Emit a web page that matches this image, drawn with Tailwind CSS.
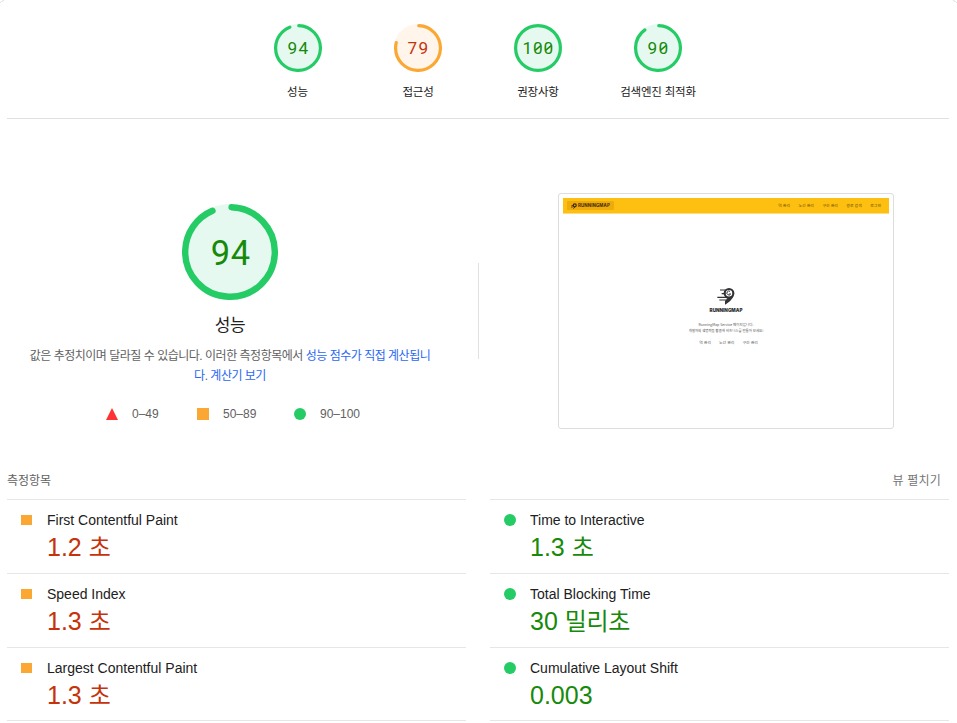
<!DOCTYPE html>
<html lang="ko">
<head>
<meta charset="utf-8">
<title>Lighthouse</title>
<script src="https://cdn.jsdelivr.net/npm/@tailwindcss/browser@4"></script>
</head>
<body class="bg-white overflow-hidden font-['Liberation_Sans','Noto_Sans_CJK_KR',sans-serif] text-[#212121]">
<div class="relative w-[957px] h-[723px] overflow-hidden px-[7px]">
  <svg class="absolute left-0 top-0" width="957" height="5" fill="none" stroke="#e0e0e0"><path d="M0 3Q1 1 4 .5M957 3Q956 1 953 .5"/></svg>

  <header class="h-[119px] w-[942px] border-b border-[#e0e0e0] pt-6 pl-[231px] flex text-center text-[11.5px] leading-4 tracking-[-0.2px]">
    <div class="w-[120px] flex flex-col items-center">
      <svg class="w-12 h-12" viewBox="0 0 120 120"><circle cx="60" cy="60" r="60" fill="#e6f9f0"/><circle cx="60" cy="60" r="56" fill="none" stroke="#25cc66" stroke-width="8" stroke-linecap="round" stroke-dasharray="326.75 352" transform="rotate(-87.95 60 60)"/><text x="34" y="75" textLength="51" font-family="Roboto" font-size="43" fill="#178a0b">94</text></svg>
      <span class="mt-3 mr-px whitespace-nowrap">성능</span>
    </div>
    <div class="w-[120px] flex flex-col items-center">
      <svg class="w-12 h-12" viewBox="0 0 120 120"><circle cx="60" cy="60" r="60" fill="#fff5eb"/><circle cx="60" cy="60" r="56" fill="none" stroke="#fba733" stroke-width="8" stroke-linecap="round" stroke-dasharray="273.97 352" transform="rotate(-87.95 60 60)"/><text x="34" y="75" textLength="51" font-family="Roboto" font-size="43" fill="#c5330b">79</text></svg>
      <span class="mt-3 whitespace-nowrap">접근성</span>
    </div>
    <div class="w-[120px] flex flex-col items-center">
      <svg class="w-12 h-12" viewBox="0 0 120 120"><circle cx="60" cy="60" r="60" fill="#e6f9f0"/><circle cx="60" cy="60" r="56" fill="none" stroke="#25cc66" stroke-width="8"/><text x="21" y="75" textLength="77" font-family="Roboto" font-size="43" fill="#178a0b">100</text><path d="M53 66L67 54M79 66L93 54" stroke="#178a0b" stroke-width="3.5"/></svg>
      <span class="mt-3 whitespace-nowrap">권장사항</span>
    </div>
    <div class="w-[120px] flex flex-col items-center">
      <svg class="w-12 h-12" viewBox="0 0 120 120"><circle cx="60" cy="60" r="60" fill="#e6f9f0"/><circle cx="60" cy="60" r="56" fill="none" stroke="#25cc66" stroke-width="8" stroke-linecap="round" stroke-dasharray="312.67 352" transform="rotate(-87.95 60 60)"/><text x="34" y="75" textLength="51" font-family="Roboto" font-size="43" fill="#178a0b">90</text><path d="M66 66L80 54" stroke="#178a0b" stroke-width="3.5"/></svg>
      <span class="mt-3 whitespace-nowrap">검색엔진 최적화</span>
    </div>
  </header>

  <main>
    <section class="h-[348px] w-[942px] flex">
      <div class="w-[446px] pt-[85px] flex flex-col items-center">
        <svg class="w-24 h-24" viewBox="0 0 120 120"><circle cx="60" cy="60" r="60" fill="#e6f9f0"/><circle cx="60" cy="60" r="56" fill="none" stroke="#25cc66" stroke-width="8" stroke-linecap="round" stroke-dasharray="326.75 352" transform="rotate(-87.95 60 60)"/><text x="36" y="76" textLength="49" font-family="Roboto" font-size="43" fill="#178a0b">94</text></svg>
        <h2 class="mt-[14px] text-[17px] leading-6 tracking-[-0.5px]">성능</h2>
        <p class="mt-2 h-10 text-[12px] leading-5 tracking-[-0.49px] text-[#616161] text-center whitespace-nowrap">값은 추정치이며 달라질 수 있습니다. 이러한 측정항목에서 <a class="text-[#2a67f4]">성능 점수가 직접 계산됩니<br>다</a>. <a class="text-[#2a67f4]">계산기 보기</a></p>
        <div class="mt-[18px] w-[446px] pl-[99px] h-5 flex items-center text-[12px] text-[#616161]">
          <svg class="w-3 h-3" viewBox="0 0 12 12"><path d="M6 0L12 12H0Z" fill="#f33"/></svg><span class="ml-[14px] w-[65px]">0–49</span>
          <i class="w-3 h-3 bg-[#fba733]"></i><span class="ml-[14px] w-[71px]">50–89</span>
          <i class="w-3 h-3 rounded-full bg-[#25cc66]"></i><span class="ml-[14px]">90–100</span>
        </div>
      </div>
      <div class="mt-[144px] ml-[25px] w-px h-24 bg-[#e0e0e0]"></div>
      <div class="mt-[74px] ml-[79px] w-[336px] h-[236px] border border-[#ddd] rounded-[3px] p-1 font-['Noto_Sans_CJK_KR',sans-serif]">
        <div class="h-4 w-[326px] bg-[#fdbf10] border-b border-[#ffdb80] flex items-center text-[3.9px] leading-none text-[#6b4c08] whitespace-nowrap">
          <div class="ml-1 w-[47px] h-[9px] bg-[#efaa0b] rounded-[1px] flex items-center pl-[4px] text-[#3b2c0b]">
            <svg width="6" height="6" viewBox="0 0 24 24" fill="none" stroke="currentColor"><circle cx="15" cy="9" r="6" stroke-width="5"/><path d="M19 13L9 23M2 10H9M0 16H10" stroke-width="3"/></svg>
            <b class="ml-px mt-px text-[4.4px] font-bold font-['Inter',sans-serif] tracking-[0.1px]">RUNNINGMAP</b>
          </div>
          <div class="ml-auto mr-[8px] mt-px flex gap-[8.5px]"><span>역 관리</span><span>노선 관리</span><span>구간 관리</span><span>경로 검색</span><span>로그인</span></div>
        </div>
        <div class="pt-[73px] flex flex-col items-center text-[3.4px] leading-none text-[#555] whitespace-nowrap">
          <svg class="w-5 h-[18px]" viewBox="0 0 60 54" fill="none" stroke="#303236"><circle cx="39" cy="19" r="13" stroke-width="6.5"/><path d="M42 13A6 6 0 1 0 44 21H39" stroke-width="3"/><path d="M54 25C49 38 37 48 27 53V42L34 34Z" fill="#303236" stroke="none"/><path d="M12 9H28M17 20H26M4 31H30M10 39H31" stroke-width="3.5"/></svg>
          <b class="mt-1 text-[4.6px] font-black text-[#303236] font-['Inter',sans-serif]">RUNNINGMAP</b>
          <span class="mt-[9px] text-[3.5px]">RunningMap Service 페이지입니다.</span>
          <span class="mt-[3px]">개발자의 생명력을 활용해 비즈니스를 만들어 보세요!</span>
          <div class="mt-[8px] mr-[-5px] flex gap-[8px] text-[3.9px]"><span>역 관리</span><span>노선 관리</span><span>구간 관리</span></div>
        </div>
      </div>
    </section>

    <div class="h-8 w-[942px] pt-px flex justify-between text-[12px] leading-[27px] text-[#616161] whitespace-nowrap"><span>측정항목</span><span class="mr-2 text-[#757575] tracking-[0.2px]">뷰 펼치기</span></div>

    <section class="w-[942px] grid grid-cols-[459px_459px] gap-x-6 text-[14px]">
      <div class="h-[74px] border-t border-[#e6e6e6] flex pt-[10px]"><i class="mt-[5px] ml-[14px] w-[11px] h-[10px] bg-[#fba733]"></i><div class="ml-[15px]"><div class="leading-5">First Contentful Paint</div><div class="text-[25px] leading-[34px] text-[#c5330b] whitespace-nowrap">1.2 <span class="text-[24px]">초</span></div></div></div>
      <div class="h-[74px] border-t border-[#e6e6e6] flex pt-[10px]"><i class="mt-1 ml-[14px] w-3 h-3 rounded-full bg-[#25cc66]"></i><div class="ml-[14px]"><div class="leading-5">Time to Interactive</div><div class="text-[25px] leading-[34px] text-[#178a0b] whitespace-nowrap">1.3 <span class="text-[24px]">초</span></div></div></div>
      <div class="h-[74px] border-t border-[#e6e6e6] flex pt-[10px]"><i class="mt-[5px] ml-[14px] w-[11px] h-[10px] bg-[#fba733]"></i><div class="ml-[15px]"><div class="leading-5">Speed Index</div><div class="text-[25px] leading-[34px] text-[#c5330b] whitespace-nowrap">1.3 <span class="text-[24px]">초</span></div></div></div>
      <div class="h-[74px] border-t border-[#e6e6e6] flex pt-[10px]"><i class="mt-1 ml-[14px] w-3 h-3 rounded-full bg-[#25cc66]"></i><div class="ml-[14px]"><div class="leading-5">Total Blocking Time</div><div class="text-[25px] leading-[34px] text-[#178a0b] whitespace-nowrap">30 <span class="text-[24px] tracking-[-0.3px]">밀리초</span></div></div></div>
      <div class="h-[74px] border-y border-[#e6e6e6] flex pt-[10px]"><i class="mt-[5px] ml-[14px] w-[11px] h-[10px] bg-[#fba733]"></i><div class="ml-[15px]"><div class="leading-5">Largest Contentful Paint</div><div class="text-[25px] leading-[34px] text-[#c5330b] whitespace-nowrap">1.3 <span class="text-[24px]">초</span></div></div></div>
      <div class="h-[74px] border-y border-[#e6e6e6] flex pt-[10px]"><i class="mt-1 ml-[14px] w-3 h-3 rounded-full bg-[#25cc66]"></i><div class="ml-[14px]"><div class="leading-5">Cumulative Layout Shift</div><div class="text-[25px] leading-[34px] text-[#178a0b] whitespace-nowrap">0.003</div></div></div>
    </section>
  </main>
</div>
</body>
</html>
